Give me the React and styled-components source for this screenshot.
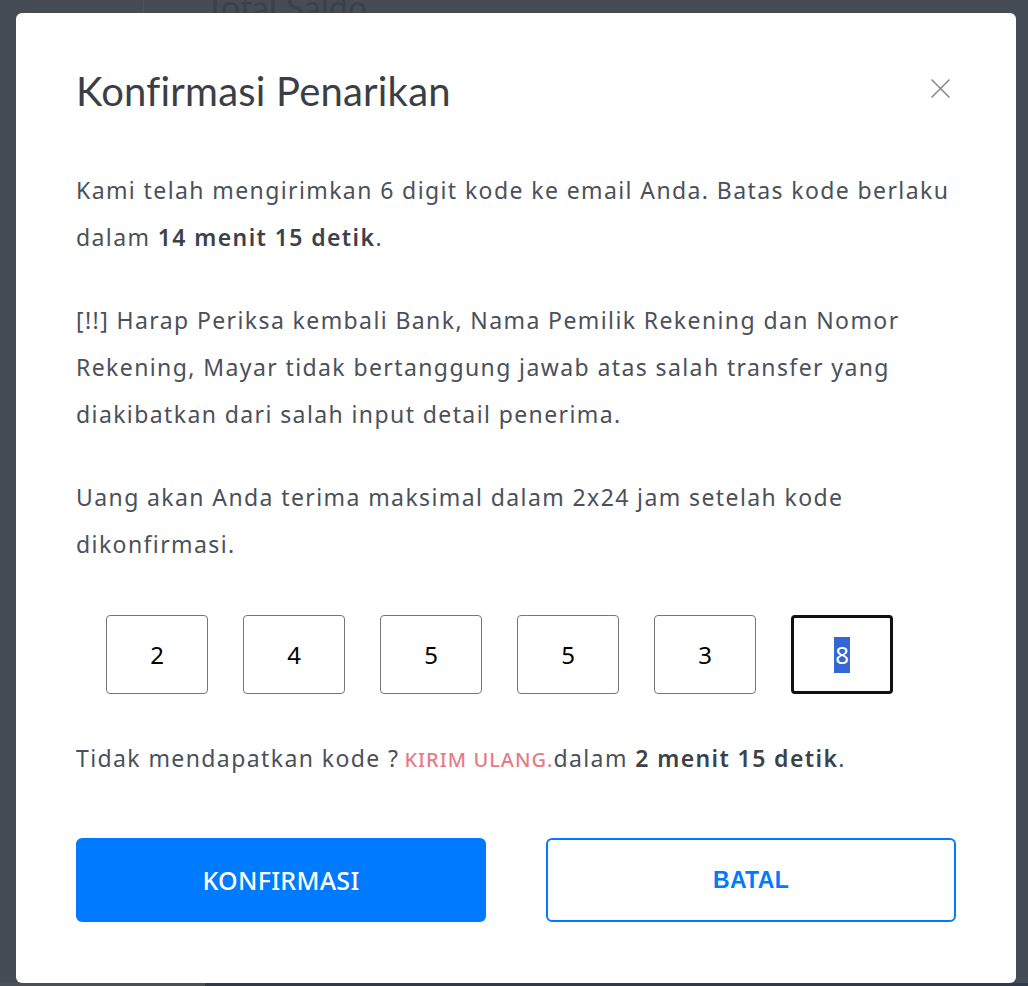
import React from "react";
import styled, { createGlobalStyle } from "styled-components";

const GlobalStyle = createGlobalStyle`
  html, body {
    margin: 0;
    padding: 0;
    background: #464c55;
  }
  body {
    font-family: "Noto Sans", "Open Sans", sans-serif;
    overflow: hidden;
  }
`;

const Page = styled.div`
  position: relative;
  width: 1028px;
  height: 986px;
  background: #2e3b4e;
`;

const Sidebar = styled.aside`
  position: absolute;
  left: 0;
  top: 0;
  bottom: 0;
  width: 205px;
  background: #4a4f55;
`;

const Backdrop = styled.div`
  position: absolute;
  inset: 0 0 3px 0;
  background: #464c55;
`;

const BgHeading = styled.h2`
  margin: 0;
  position: absolute;
  left: 205px;
  top: -14px;
  font-family: "Lato", sans-serif;
  font-weight: 400;
  font-size: 34px;
  color: #3b414a;
`;

const BgLine = styled.div`
  position: absolute;
  left: 143px;
  top: 0;
  width: 1px;
  height: 13px;
  background: #4e545d;
`;

const Modal = styled.div`
  position: absolute;
  left: 16px;
  top: 13px;
  width: 1000px;
  height: 970px;
  box-sizing: border-box;
  background: #fff;
  border-radius: 6px;
  padding: 55px 60px 60px;
  display: flex;
  flex-direction: column;
`;

const Header = styled.div`
  display: flex;
  align-items: center;
  justify-content: space-between;
  margin-bottom: 53px;
`;

const Title = styled.h1`
  margin: 0;
  font-family: "Lato", sans-serif;
  font-weight: 400;
  font-size: 40px;
  letter-spacing: 0.2px;
  line-height: 46px;
  color: #3a3f47;
`;

const CloseButton = styled.button`
  border: none;
  background: none;
  padding: 0;
  margin: 0 6px 6px 0;
  width: 20px;
  height: 20px;
  cursor: pointer;
  display: flex;
  align-items: center;
  justify-content: center;
`;

const Paragraph = styled.p`
  margin: 0 0 ${(p) => p.$gap ?? 36}px;
  font-size: 23px;
  letter-spacing: 1.4px;
  line-height: 47px;
  color: #4b5059;

  b {
    font-weight: 600;
    color: #3d424a;
  }
`;

const OtpRow = styled.div`
  display: grid;
  grid-template-columns: repeat(6, 102px);
  column-gap: 35px;
  margin: 47px 0 41px 30px;
`;

const OtpBox = styled.div`
  height: 79px;
  box-sizing: border-box;
  border: ${(p) => (p.$focused ? "3px solid #111" : "1px solid #767676")};
  border-radius: 4px;
  display: flex;
  align-items: center;
  justify-content: center;
  font-family: "Noto Sans", sans-serif;
  font-size: 24px;
  color: #000;
`;

const Selected = styled.span`
  background: #3367d6;
  color: #fff;
  line-height: 36px;
  padding: 0 1px;
`;

const Resend = styled(Paragraph)`
  margin: 0 0 55px;
`;

const ResendLink = styled.a`
  font-size: 20px;
  font-weight: 500;
  letter-spacing: 1px;
  color: #e57b89;
  text-decoration: none;
  cursor: pointer;
  margin-left: 5px;
`;

const Actions = styled.div`
  display: grid;
  grid-template-columns: 410px 410px;
  column-gap: 60px;
`;

const Button = styled.button`
  height: 84px;
  border-radius: 6px;
  font-size: ${(p) => (p.$outline ? "23px" : "25px")};
  font-family: ${(p) =>
    p.$outline ? '"Liberation Sans", Arial, sans-serif' : '"Noto Sans", sans-serif'};
  font-weight: ${(p) => (p.$outline ? 700 : 500)};
  letter-spacing: 0.3px;
  cursor: pointer;
  border: 2px solid #007bff;
  background: ${(p) => (p.$outline ? "#fff" : "#007bff")};
  color: ${(p) => (p.$outline ? "#007bff" : "#fff")};
`;

const code = ["2", "4", "5", "5", "3", "8"];

function App() {
  return (
    <Page>
      <GlobalStyle />
      <Sidebar />
      <Backdrop />
      <BgLine />
      <BgHeading>Total Saldo</BgHeading>
      <Modal>
        <Header>
          <Title>Konfirmasi Penarikan</Title>
          <CloseButton aria-label="Tutup">
            <svg width="19" height="19" viewBox="0 0 19 19">
              <path
                d="M1 1L18 18M18 1L1 18"
                stroke="#8a8a8a"
                strokeWidth="1.6"
                strokeLinecap="round"
              />
            </svg>
          </CloseButton>
        </Header>
        <Paragraph>
          Kami telah mengirimkan 6 digit kode ke email Anda. Batas kode berlaku
          dalam <b>14 menit 15 detik</b>.
        </Paragraph>
        <Paragraph>
          [!!] Harap Periksa kembali Bank, Nama Pemilik Rekening dan Nomor
          Rekening, Mayar tidak bertanggung jawab atas salah transfer yang
          diakibatkan dari salah input detail penerima.
        </Paragraph>
        <Paragraph $gap={0}>
          Uang akan Anda terima maksimal dalam 2x24 jam setelah kode
          dikonfirmasi.
        </Paragraph>
        <OtpRow>
          {code.map((d, i) => (
            <OtpBox key={i} $focused={i === code.length - 1}>
              {i === code.length - 1 ? <Selected>{d}</Selected> : d}
            </OtpBox>
          ))}
        </OtpRow>
        <Resend>
          Tidak mendapatkan kode ?<ResendLink>KIRIM ULANG.</ResendLink>dalam{" "}
          <b>2 menit 15 detik</b>.
        </Resend>
        <Actions>
          <Button>KONFIRMASI</Button>
          <Button $outline>BATAL</Button>
        </Actions>
      </Modal>
    </Page>
  );
}

export default App;
